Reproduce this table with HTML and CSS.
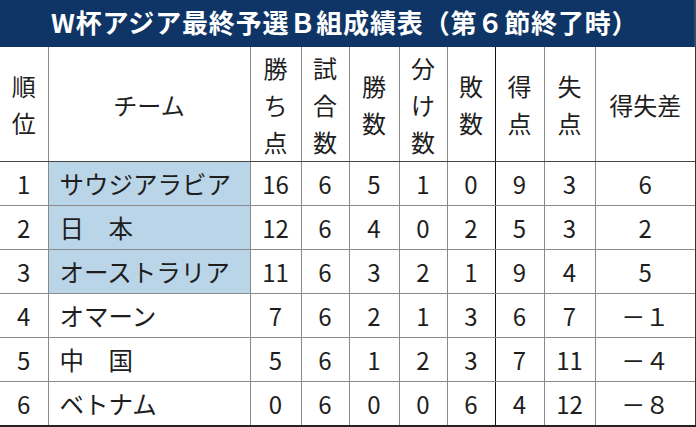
FILE: index.html
```html
<!DOCTYPE html>
<html lang="ja">
<head>
<meta charset="utf-8">
<link rel="stylesheet" href="styles.css">
</head>
<body>
<div class="page">
  <div class="title">W杯アジア最終予選Ｂ組成績表（第６節終了時）</div>
  <table class="standings">
    <colgroup>
      <col class="c-rank"><col class="c-team"><col class="c-pts"><col class="c-gp"><col class="c-w"><col class="c-d"><col class="c-l"><col class="c-gf"><col class="c-ga"><col class="c-gd">
    </colgroup>
    <thead>
      <tr>
        <th>順<br>位</th>
        <th>チーム</th>
        <th>勝<br>ち<br>点</th>
        <th>試<br>合<br>数</th>
        <th>勝<br>数</th>
        <th>分<br>け<br>数</th>
        <th class="sep">敗<br>数</th>
        <th>得<br>点</th>
        <th>失<br>点</th>
        <th>得失差</th>
      </tr>
    </thead>
    <tbody>
      <tr><td>1</td><td class="team hl">サウジアラビア</td><td>16</td><td>6</td><td>5</td><td>1</td><td class="sep">0</td><td>9</td><td>3</td><td>6</td></tr>
      <tr><td>2</td><td class="team hl">日　本</td><td>12</td><td>6</td><td>4</td><td>0</td><td class="sep">2</td><td>5</td><td>3</td><td>2</td></tr>
      <tr><td>3</td><td class="team hl">オーストラリア</td><td>11</td><td>6</td><td>3</td><td>2</td><td class="sep">1</td><td>9</td><td>4</td><td>5</td></tr>
      <tr><td>4</td><td class="team">オマーン</td><td>7</td><td>6</td><td>2</td><td>1</td><td class="sep">3</td><td>6</td><td>7</td><td>－１</td></tr>
      <tr><td>5</td><td class="team">中　国</td><td>5</td><td>6</td><td>1</td><td>2</td><td class="sep">3</td><td>7</td><td>11</td><td>－４</td></tr>
      <tr><td>6</td><td class="team">ベトナム</td><td>0</td><td>6</td><td>0</td><td>0</td><td class="sep">6</td><td>4</td><td>12</td><td>－８</td></tr>
    </tbody>
  </table>
</div>
</body>
</html>
```

FILE: styles.css
```css
html, body {
  margin: 0;
  padding: 0;
  background: #ffffff;
}
.page {
  width: 696px;
  height: 427px;
  overflow: hidden;
  font-family: "Noto Sans CJK JP", "Noto Sans", sans-serif;
  color: #1e1e1e;
}
.title {
  height: 47px;
  box-sizing: border-box;
  background: #0e3566;
  color: #ffffff;
  font-weight: 700;
  font-size: 26px;
  line-height: 44px;
  padding-left: 51px;
  letter-spacing: 0.85px;
  white-space: nowrap;
  border-right: 2px solid #3a4a66;
}
.standings {
  border-collapse: collapse;
  table-layout: fixed;
  width: 696px;
}
.c-rank { width: 48px; }
.c-team { width: 202px; }
.c-pts { width: 51px; }
.c-gp { width: 48px; }
.c-w { width: 50px; }
.c-d { width: 48px; }
.c-l { width: 48px; }
.c-gf { width: 49px; }
.c-ga { width: 51px; }
.c-gd { width: 101px; }
.standings th,
.standings td {
  border: 1px solid #8a8a8a;
  padding: 0;
  text-align: center;
  font-weight: 400;
}
.standings tr > :first-child {
  border-left: none;
}
.standings tr > :last-child {
  border-right: 2px solid #333333;
}
.standings thead tr:first-child th {
  border-top: none;
}
.standings tbody tr:last-child td {
  border-bottom: 2px solid #222222;
}
.standings th {
  height: 114px;
  font-size: 24px;
  line-height: 37px;
}
.standings td {
  height: 43px;
  font-size: 24px;
  line-height: 26px;
}
.standings td.team {
  text-align: left;
  padding-left: 11px;
  font-size: 24.5px;
}
.standings .sep {
  border-right: 1px solid #111111;
}
.standings td.hl {
  background: #bad5e7;
}
.standings thead th {
  border-bottom: 1px solid #444444;
}
```
